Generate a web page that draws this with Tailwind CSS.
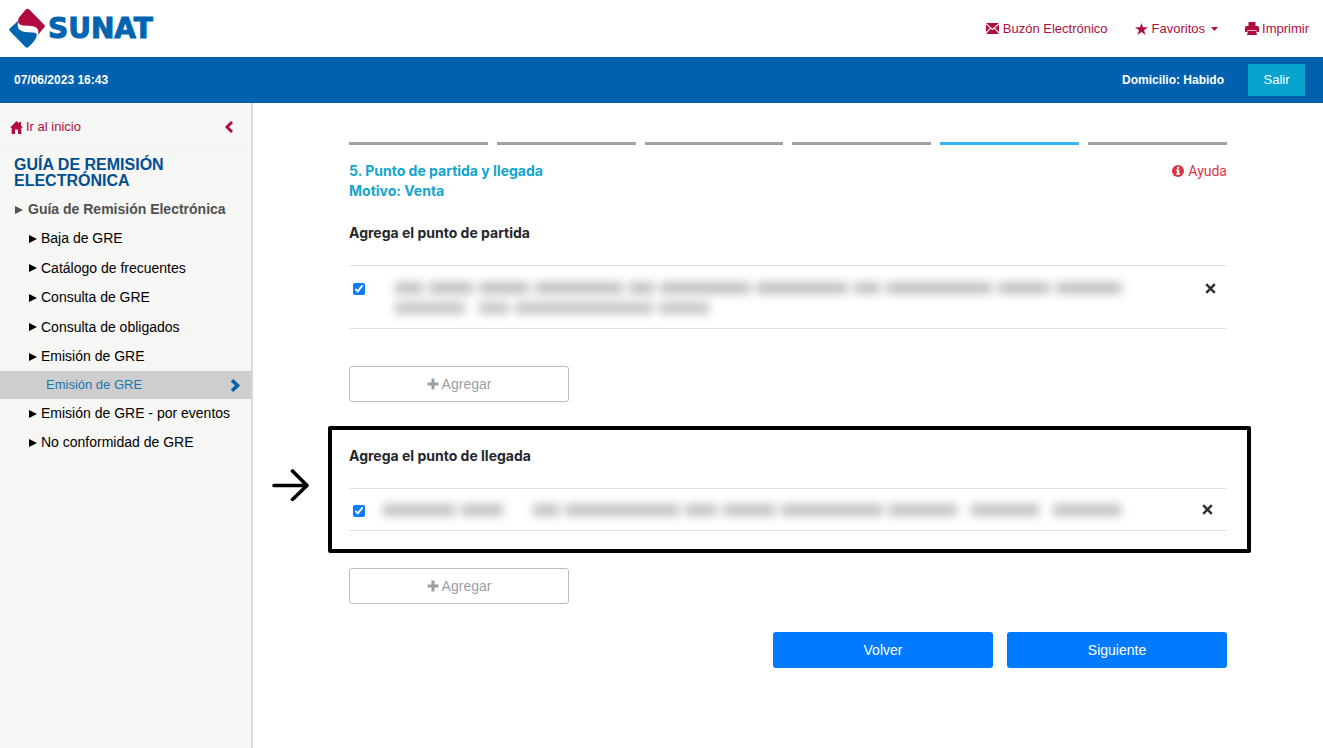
<!DOCTYPE html>
<html lang="es">
<head>
<meta charset="utf-8">
<title>SUNAT - Guía de Remisión Electrónica</title>
<script src="https://cdn.jsdelivr.net/npm/@tailwindcss/browser@4"></script>
</head>
<body class="min-h-screen flex flex-col bg-white text-[13px] font-['Liberation_Sans',Arial,sans-serif]">
<header>
  <div class="h-[57px] flex items-center justify-between pl-2 pr-3.5">
    <a href="#" class="flex items-center gap-0.5 text-[#0064b0]" aria-label="SUNAT">
      <svg class="w-[38px] h-[41px]" viewBox="0 0 38 41">
        <path fill="#0064b0" d="M10.500 12.500L1.800 20.600Q.6 21.700 1.800 22.900L17.500 39Q19 40.500 20.500 39L25 34.500Q28.800 30 28.800 26.500Q28.600 24.800 25 24.400L17 23.900Q10.500 23 9.800 18.500Q9.500 15.500 10.500 12.500Z"/>
        <path fill="#b10c3f" d="M11 9.500L17.500 1.800Q19.300-.2 21.300 1.600L36.200 16.800Q37.500 18.200 36.200 19.600L29.800 27Q31.500 22 28.500 19.800Q26 18 21 17.800L15 17.400Q8 16.500 11 9.500Z"/>
      </svg>
      <span class="font-['DejaVu_Sans',sans-serif] font-bold text-[28px] leading-8 [-webkit-text-stroke:1px_#0064b0]">SUNAT</span>
    </a>
    <nav class="flex items-center text-[#b10c3f]">
      <a href="#" class="flex items-center gap-1 mr-[27px]">
        <svg class="w-[13px] h-[11px]" viewBox="0 0 13 11" fill="currentColor"><path d="M0 0H13L6.500 5.800Z"/><path d="M0 1.400L4 5L0 9ZM13 1.400L9 5L13 9ZM0 11L4.700 5.800L6.500 7.300L8.300 5.800L13 11Z"/></svg>
        Buzón Electrónico</a>
      <a href="#" class="flex items-center gap-1 mr-[27px]">
        <svg class="w-[13px] h-3" viewBox="0 0 13 12" fill="currentColor"><path d="M6.500 0L8 4.300H13L9 7.200L10.500 12L6.500 9.100L2.500 12L4 7.200L0 4.300H5Z"/></svg>
        Favoritos
        <svg class="w-[7px] h-1 ml-0.5" viewBox="0 0 7 4" fill="currentColor"><path d="M0 0H7L3.500 4Z"/></svg></a>
      <a href="#" class="flex items-center gap-[3px]">
        <svg class="w-[14px] h-[13px]" viewBox="0 0 14 13" fill="currentColor"><path d="M3.500 0H10.500V4H12.500Q14 4.200 14 6V10H11.500V8.300H2.500V10H0V6Q0 4.200 1.500 4H3.500ZM3 9H11L12 13H2Z"/></svg>
        Imprimir</a>
    </nav>
  </div>
  <div class="h-[46px] flex items-center bg-[#0062af] text-white font-bold text-[12px] pl-3.5 pr-[18px]">
    <time class="flex-1" datetime="2023-06-07T16:43">07/06/2023 16:43</time>
    <span class="mr-6">Domicilio: Habido</span>
    <button class="w-[57px] h-8 bg-[#08a4cf] font-normal text-[13px]">Salir</button>
  </div>
</header>
<div class="flex-1 flex">
  <aside class="w-[253px] shrink-0 bg-[#f6f6f5] border-r-2 border-[#d8d8da]">
    <div class="h-[47px] pt-0.5 flex items-center justify-between pl-2.5 pr-[18px] text-[#b10c3f] border-b border-[#f2f2f1]">
      <a href="#" class="flex items-center gap-[3px]">
        <svg class="w-[13px] h-[13px]" viewBox="0 0 13 13" fill="currentColor"><path d="M6.500 0L9 2.500V1H11V4.500L13 6.800H11.300V13H8V8.500H5V13H1.700V6.800H0Z"/></svg>
        Ir al inicio</a>
      <button aria-label="Contraer menú"><svg class="w-2 h-3" viewBox="0 0 8 12" fill="none" stroke="currentColor" stroke-width="3"><path d="M7 1L2 6L7 11"/></svg></button>
    </div>
    <h1 class="pl-3.5 pt-[7px] text-[16px] leading-4 font-bold text-[#004f91]">GUÍA DE REMISIÓN<br>ELECTRÓNICA</h1>
    <nav class="pt-1.5 text-[14px] text-black">
      <a href="#" class="h-[29px] flex items-center gap-[5px] pl-[15px] font-bold text-[#505050]"><svg class="w-2 h-2" viewBox="0 0 8 8" fill="currentColor"><path d="M0 0L8 4L0 8Z"/></svg>Guía de Remisión Electrónica</a>
      <a href="#" class="h-[29px] flex items-center gap-1 pl-[29px]"><svg class="w-2 h-2" viewBox="0 0 8 8"><path d="M0 0L8 4L0 8Z"/></svg>Baja de GRE</a>
      <a href="#" class="h-[30px] flex items-center gap-1 pl-[29px]"><svg class="w-2 h-2" viewBox="0 0 8 8"><path d="M0 0L8 4L0 8Z"/></svg>Catálogo de frecuentes</a>
      <a href="#" class="h-[29px] flex items-center gap-1 pl-[29px]"><svg class="w-2 h-2" viewBox="0 0 8 8"><path d="M0 0L8 4L0 8Z"/></svg>Consulta de GRE</a>
      <a href="#" class="h-[30px] flex items-center gap-1 pl-[29px]"><svg class="w-2 h-2" viewBox="0 0 8 8"><path d="M0 0L8 4L0 8Z"/></svg>Consulta de obligados</a>
      <a href="#" class="h-[29px] flex items-center gap-1 pl-[29px]"><svg class="w-2 h-2" viewBox="0 0 8 8"><path d="M0 0L8 4L0 8Z"/></svg>Emisión de GRE</a>
      <a href="#" class="h-7 flex items-center justify-between pl-[46px] pr-2.5 bg-[#cecece] text-[#1b75b0] text-[13px]">Emisión de GRE<svg class="w-[11px] h-[13px]" viewBox="0 0 11 13" fill="none" stroke="#0062a8" stroke-width="3.600"><path d="M2 1.300L7.500 6.500L2 11.700"/></svg></a>
      <a href="#" class="h-[29px] flex items-center gap-1 pl-[29px]"><svg class="w-2 h-2" viewBox="0 0 8 8"><path d="M0 0L8 4L0 8Z"/></svg>Emisión de GRE - por eventos</a>
      <a href="#" class="h-[29px] flex items-center gap-1 pl-[29px]"><svg class="w-2 h-2" viewBox="0 0 8 8"><path d="M0 0L8 4L0 8Z"/></svg>No conformidad de GRE</a>
    </nav>
  </aside>
  <main class="flex-1 px-24 pt-[39px] pb-20 text-[14px] text-[#24282c]">
    <div class="grid grid-cols-6 gap-[9px]" role="progressbar" aria-valuemin="1" aria-valuemax="6" aria-valuenow="5" aria-label="Paso 5 de 6">
      <div class="h-[3px] bg-[#a2a2a2]"></div><div class="h-[3px] bg-[#a2a2a2]"></div><div class="h-[3px] bg-[#a2a2a2]"></div><div class="h-[3px] bg-[#a2a2a2]"></div><div class="h-[3px] bg-[#38b6f2]"></div><div class="h-[3px] bg-[#a2a2a2]"></div>
    </div>
    <div class="flex justify-between items-start pt-4 leading-5 font-['Inter',sans-serif]">
      <h2 class="font-bold text-[#12a5cf]">5. Punto de partida y llegada<br>Motivo: Venta</h2>
      <a href="#" class="flex items-center gap-1 text-[#dc3545] font-['Roboto',sans-serif]"><svg class="w-3 h-3" viewBox="0 0 12 12"><circle cx="6" cy="6" r="6" fill="#dc3545"/><path fill="#fff" d="M5 1.700H7.200V3.700H5ZM4.300 4.600H7.200V8.300H8V9.700H4.300V8.300H5V6H4.300Z"/></svg>Ayuda</a>
    </div>
    <section class="pt-[22px]">
      <h3 class="font-bold leading-5 font-['Inter',sans-serif]">Agrega el punto de partida</h3>
      <table class="mt-[22px] w-full border-y border-[#dee2e6]">
        <tr class="align-top">
          <td class="w-[46px] pl-1 pt-[17px]"><input type="checkbox" checked aria-label="Seleccionar punto de partida" class="block w-3 h-3 accent-[#0b7bff]"></td>
          <td class="h-[63px] pt-4">
            <div class="blur-[5px]" aria-hidden="true">
              <div class="flex gap-1.5 h-3 mb-2">
                <i class="w-[28px] bg-[#c0c2c4]"></i><i class="w-[44px] bg-[#c0c2c4]"></i><i class="w-[50px] bg-[#c0c2c4]"></i><i class="w-[88px] bg-[#c0c2c4]"></i><i class="w-[25px] bg-[#c0c2c4]"></i><i class="w-[90px] bg-[#c0c2c4]"></i><i class="w-[92px] bg-[#c0c2c4]"></i><i class="w-[26px] bg-[#c0c2c4]"></i><i class="w-[106px] bg-[#c0c2c4]"></i><i class="w-[52px] bg-[#c0c2c4]"></i><i class="w-[66px] bg-[#c0c2c4]"></i>
              </div>
              <div class="flex gap-1.5 h-3">
                <i class="w-[70px] bg-[#c4c6c8] mr-2"></i><i class="w-[30px] bg-[#c4c6c8]"></i><i class="w-[138px] bg-[#c4c6c8]"></i><i class="w-[50px] bg-[#c4c6c8]"></i>
              </div>
            </div>
          </td>
          <td class="w-[22px] pt-[17px]"><button class="block" aria-label="Eliminar"><svg class="w-[11px] h-[11px]" viewBox="0 0 11 11" fill="none" stroke="#2c3135" stroke-width="2.500"><path d="M1.200 1.200L9.800 9.800M9.800 1.200L1.200 9.800"/></svg></button></td>
        </tr>
      </table>
      <button class="mt-[37px] w-[220px] h-9 flex items-center justify-center gap-[3px] border border-[#b9bdc1] rounded-[3px] text-[#9a9fa4]"><svg class="w-3 h-3" viewBox="0 0 12 12" fill="none" stroke="currentColor" stroke-width="3"><path d="M6 .5V11.500M.5 6H11.500"/></svg>Agregar</button>
    </section>
    <section class="relative mt-6 -ml-[21px] -mr-6 pl-[17px] pr-5 pt-4 pb-[18px] border-4 border-black rounded-[2px]">
      <svg class="absolute -left-[60px] top-[39px] w-[38px] h-8" viewBox="0 0 38 32" fill="none" stroke="#000" stroke-width="3.600" stroke-linecap="round" stroke-linejoin="round"><path d="M2 16.500H35M20.500 2L35 16.500L20.500 30.500"/></svg>
      <h3 class="font-bold leading-5 font-['Inter',sans-serif]">Agrega el punto de llegada</h3>
      <table class="mt-[22px] w-full border-y border-[#dee2e6]">
        <tr>
          <td class="w-[34px] pl-1 pt-[3px]"><input type="checkbox" checked aria-label="Seleccionar punto de llegada" class="block w-3 h-3 accent-[#0b7bff]"></td>
          <td class="h-[42px]">
            <div class="blur-[5px] flex gap-1.5 h-3" aria-hidden="true">
              <i class="w-[72px] bg-[#c0c2c4]"></i><i class="w-[42px] bg-[#c0c2c4] mr-6"></i><i class="w-[26px] bg-[#c0c2c4]"></i><i class="w-[114px] bg-[#c0c2c4]"></i><i class="w-[32px] bg-[#c0c2c4]"></i><i class="w-[52px] bg-[#c0c2c4]"></i><i class="w-[102px] bg-[#c0c2c4]"></i><i class="w-[68px] bg-[#c0c2c4] mr-2"></i><i class="w-[68px] bg-[#c0c2c4] mr-2"></i><i class="w-[68px] bg-[#c0c2c4]"></i>
            </div>
          </td>
          <td class="w-[25px]"><button class="block" aria-label="Eliminar"><svg class="w-[11px] h-[11px]" viewBox="0 0 11 11" fill="none" stroke="#2c3135" stroke-width="2.500"><path d="M1.200 1.200L9.800 9.800M9.800 1.200L1.200 9.800"/></svg></button></td>
        </tr>
      </table>
    </section>
    <button class="mt-[15px] w-[220px] h-9 flex items-center justify-center gap-[3px] border border-[#b9bdc1] rounded-[3px] text-[#9a9fa4]"><svg class="w-3 h-3" viewBox="0 0 12 12" fill="none" stroke="currentColor" stroke-width="3"><path d="M6 .5V11.500M.5 6H11.500"/></svg>Agregar</button>
    <div class="mt-7 flex justify-end gap-3.5 text-white">
      <button class="w-[220px] h-9 bg-[#007bff] rounded-[3px]">Volver</button>
      <button class="w-[220px] h-9 bg-[#007bff] rounded-[3px]">Siguiente</button>
    </div>
  </main>
</div>
</body>
</html>
